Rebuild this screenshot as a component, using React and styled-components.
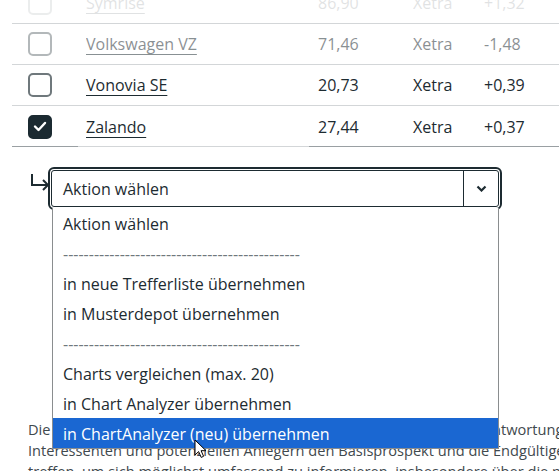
import React, { useState } from 'react';
import styled, { createGlobalStyle } from 'styled-components';

const GlobalStyle = createGlobalStyle`
  body {
    margin: 0;
    background: #fff;
    overflow: hidden;
    font-family: 'Open Sans', 'Liberation Sans', sans-serif;
    color: #1d2b31;
  }
`;

const Page = styled.div`
  position: relative;
  width: 559px;
  height: 471px;
  overflow: hidden;
`;

const Table = styled.div`
  margin: -17px 0 0 12px;
  width: 600px;
`;

const Row = styled.div`
  display: grid;
  grid-template-columns: 74px 232px 95px 71px 1fr;
  align-items: center;
  height: 41px;
  box-sizing: border-box;
  border-bottom: 1px solid #d3d6d8;
  font-size: 16px;

  &:last-child {
    border-bottom: none;
    background: linear-gradient(to right, #9aa0a3 66px, #d3d6d8 66px, #d3d6d8 297px, #9aa0a3 297px)
      bottom / 100% 1px no-repeat;
  }
`;

const Cell = styled.div`
  opacity: ${(p) => p.$fade};
  white-space: nowrap;
`;

const CheckCell = styled(Cell)`
  padding-left: 16px;
  display: flex;
`;

const Box = styled.span`
  width: 24px;
  height: 24px;
  box-sizing: border-box;
  border-radius: 5px;
  border: 2px solid ${(p) => (p.$checked ? '#1b2a31' : '#6f787c')};
  background: ${(p) => (p.$checked ? '#1b2a31' : '#fff')};
  display: flex;
  align-items: center;
  justify-content: center;
`;

const Name = styled.a`
  color: #1d2b31;
  text-decoration: underline;
  text-decoration-thickness: 1px;
  text-underline-offset: 4px;
  cursor: pointer;
`;

const ActionRow = styled.div`
  display: flex;
  align-items: flex-start;
  margin: 23px 0 0 30px;
`;

const TurnArrow = styled.svg`
  width: 20px;
  height: 20px;
  margin-top: 2px;
  flex-shrink: 0;
`;

const SelectWrap = styled.div`
  position: relative;
  margin-left: 1px;
`;

const SelectBox = styled.div`
  display: flex;
  width: 448px;
  height: 37px;
  box-sizing: border-box;
  border: 1px solid #1d2b31;
  border-radius: 3px;
  outline: 2px solid #1d2b31;
  outline-offset: 1px;
  background: #fff;
  font-size: 16px;
`;

const SelectLabel = styled.div`
  flex: 1;
  display: flex;
  align-items: center;
  padding-left: 11px;
`;

const Caret = styled.div`
  width: 34px;
  border-left: 1px solid #1d2b31;
  display: flex;
  align-items: center;
  justify-content: center;
`;

const Options = styled.ul`
  position: absolute;
  top: 38px;
  left: 1px;
  width: 447px;
  box-sizing: border-box;
  margin: 0;
  padding: 0;
  list-style: none;
  background: #fff;
  border: 1px solid #8a8d8f;
  border-top: none;
  z-index: 2;
`;

const Option = styled.li`
  height: 30px;
  display: flex;
  align-items: center;
  padding: 2px 0 0 10px;
  box-sizing: border-box;
  font-size: 16px;
  white-space: nowrap;
  color: ${(p) => (p.$active ? '#fff' : p.$divider ? '#6f787c' : '#1d2b31')};
  background: ${(p) => (p.$active ? '#1a67d2' : 'transparent')};
`;

const Pointer = styled.svg`
  position: absolute;
  left: 194px;
  top: 439px;
  width: 13px;
  height: 20px;
  z-index: 3;
  pointer-events: none;
`;

const Disclaimer = styled.p`
  margin: 212px 0 0 28px;
  font-size: 14.6px;
  line-height: 21px;
  color: #3f494e;
  white-space: nowrap;
`;

const stocks = [
  { name: 'Symrise', price: '86,90', venue: 'Xetra', change: '+1,32', fade: 0.13 },
  { name: 'Volkswagen VZ', price: '71,46', venue: 'Xetra', change: '-1,48', fade: 0.52 },
  { name: 'Vonovia SE', price: '20,73', venue: 'Xetra', change: '+0,39', fade: 1 },
  { name: 'Zalando', price: '27,44', venue: 'Xetra', change: '+0,37', fade: 1, checked: true },
];

const divider = '-'.repeat(46);

const actions = [
  'Aktion wählen',
  divider,
  'in neue Trefferliste übernehmen',
  'in Musterdepot übernehmen',
  divider,
  'Charts vergleichen (max. 20)',
  'in Chart Analyzer übernehmen',
  'in ChartAnalyzer (neu) übernehmen',
];

const App = () => {
  const [active] = useState(7);

  return (
    <Page>
      <GlobalStyle />
      <Table>
        {stocks.map((s) => (
          <Row key={s.name}>
            <CheckCell $fade={s.fade}>
              <Box $checked={s.checked}>
                {s.checked && (
                  <svg width='14' height='11' viewBox='0 0 14 11'>
                    <path d='M2 5.5l3.5 3.5L12 2' fill='none' stroke='#fff' strokeWidth='2.4' strokeLinecap='round' strokeLinejoin='round' />
                  </svg>
                )}
              </Box>
            </CheckCell>
            <Cell $fade={s.fade}>
              <Name>{s.name}</Name>
            </Cell>
            <Cell $fade={s.fade}>{s.price}</Cell>
            <Cell $fade={s.fade}>{s.venue}</Cell>
            <Cell $fade={s.fade}>{s.change}</Cell>
          </Row>
        ))}
      </Table>

      <ActionRow>
        <TurnArrow viewBox='0 0 20 20'>
          <path d='M2 2v11h16M13 8l5 5-5 5' fill='none' stroke='#1d2b31' strokeWidth='2' />
        </TurnArrow>
        <SelectWrap>
          <SelectBox>
            <SelectLabel>Aktion wählen</SelectLabel>
            <Caret>
              <svg width='11' height='7' viewBox='0 0 11 7'>
                <path d='M1.5 1.5l4 4 4-4' fill='none' stroke='#1d2b31' strokeWidth='2.2' />
              </svg>
            </Caret>
          </SelectBox>
          <Options>
            {actions.map((a, i) => (
              <Option key={i} $divider={a === divider} $active={i === active}>
                {a}
              </Option>
            ))}
          </Options>
        </SelectWrap>
      </ActionRow>

      <Disclaimer>
        Die Emittentin weist darauf hin, dass es jeweils in der alleinigen Verantwortung
        <br />
        Interessenten und potenziellen Anlegern den Basisprospekt und die Endgültigen Bedingungen
        <br />
        treffen, um sich möglichst umfassend zu informieren, insbesondere über die potenziellen Risiken
      </Disclaimer>

      <Pointer viewBox='0 0 13 20'>
        <path d='M1 1v15l3.6-3.4 2.6 5.8 2.4-1.1-2.5-5.6H12z' fill='#fff' stroke='#000' strokeWidth='1' strokeLinejoin='round' />
      </Pointer>
    </Page>
  );
};

export default App;
